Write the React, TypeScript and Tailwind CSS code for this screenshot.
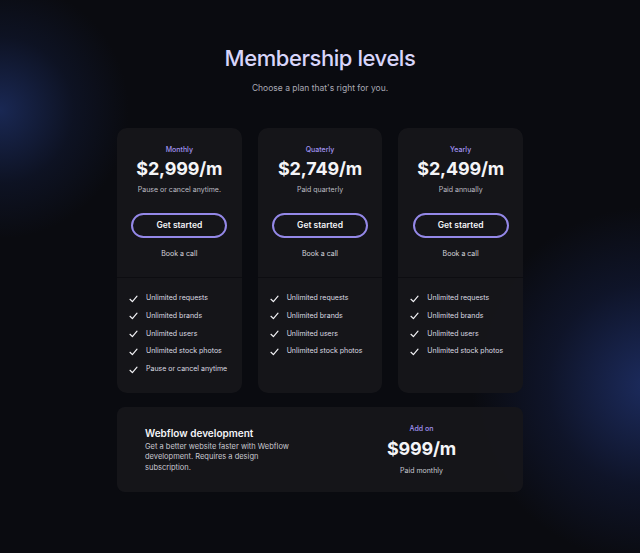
import React from 'react';

interface Plan {
  label: string;
  price: string;
  note: string;
  features: string[];
}

const plans: Plan[] = [
  {
    label: 'Monthly',
    price: '$2,999/m',
    note: 'Pause or cancel anytime.',
    features: ['Unlimited requests', 'Unlimited brands', 'Unlimited users', 'Unlimited stock photos', 'Pause or cancel anytime'],
  },
  {
    label: 'Quaterly',
    price: '$2,749/m',
    note: 'Paid quarterly',
    features: ['Unlimited requests', 'Unlimited brands', 'Unlimited users', 'Unlimited stock photos'],
  },
  {
    label: 'Yearly',
    price: '$2,499/m',
    note: 'Paid annually',
    features: ['Unlimited requests', 'Unlimited brands', 'Unlimited users', 'Unlimited stock photos'],
  },
];

const Check = () => (
  <svg width="9" height="8" viewBox="0 0 9 8" fill="none" className="shrink-0 mt-[1px]">
    <path d="M1 4.3L3.4 6.6L8 1.2" stroke="#f2f2f5" strokeWidth="1.2" strokeLinecap="round" strokeLinejoin="round" />
  </svg>
);

const PlanCard: React.FC<{ plan: Plan }> = ({ plan }) => (
  <div className="flex flex-col rounded-[10px] bg-[#16161a]/95 overflow-hidden">
    <div className="flex flex-col items-center pt-[17px] pb-[18px]">
      <div className="text-[7px] leading-[10px] font-medium text-[#a193f2]">{plan.label}</div>
      <div className="mt-[3px] text-[18px] leading-[22px] font-bold text-[#f4f4f7] tracking-[-0.01em]">{plan.price}</div>
      <div className="mt-[5px] text-[7px] leading-[10px] text-[#bdbdc4]">{plan.note}</div>
      <button className="mt-[18px] h-[25px] w-[96px] rounded-full border-2 border-[#9488e8] text-[8.5px] font-semibold text-[#f4f4f7]">
        Get started
      </button>
      <div className="mt-[11px] text-[7px] leading-[10px] text-[#d6d6dd]">Book a call</div>
    </div>
    <div className="flex flex-col gap-[7.8px] border-t border-[#0d0d11] pl-[12px] pt-[15px] pb-[19px]">
      {plan.features.map((f) => (
        <div key={f} className="flex items-center gap-[8px] text-[7px] leading-[10px] text-[#dcdce2]">
          <Check />
          <span>{f}</span>
        </div>
      ))}
    </div>
  </div>
);

export default function App() {
  return (
    <div className="relative min-h-[553px] overflow-hidden bg-[#0a0b10] font-['Inter',sans-serif]">
      {/* background glows */}
      <div className="absolute left-[-130px] top-[-20px] h-[260px] w-[260px] rounded-full bg-[radial-gradient(circle,rgba(32,52,112,0.7)_0%,rgba(20,32,70,0.35)_40%,transparent_70%)]" />
      <div className="absolute left-[470px] top-[205px] h-[360px] w-[360px] rounded-full bg-[radial-gradient(circle,rgba(34,54,120,0.75)_0%,rgba(22,34,78,0.4)_40%,transparent_70%)]" />

      <div className="relative flex flex-col items-center pt-[44px]">
        <h1 className="text-[22px] leading-[28px] font-medium tracking-[-0.02em] text-[#d8d5fa]">Membership levels</h1>
        <p className="mt-[10px] text-[8.5px] leading-[12px] text-[#a9a9b4]">Choose a plan that's right for you.</p>

        <div className="mt-[34px] grid w-[406px] grid-cols-3 gap-[16px]">
          {plans.map((p) => (
            <PlanCard key={p.label} plan={p} />
          ))}
        </div>

        <div className="mt-[14px] grid h-[85px] w-[406px] grid-cols-2 items-center rounded-[8px] bg-[#16161a]/95">
          <div className="pl-[28px]">
            <div className="text-[10px] leading-[14px] font-semibold text-[#f4f4f7]">Webflow development</div>
            <p className="mt-[2px] w-[150px] text-[7.5px] leading-[10.5px] text-[#c9c9d1]">
              Get a better website faster with Webflow development. Requires a design subscription.
            </p>
          </div>
          <div className="flex flex-col items-center">
            <div className="text-[7px] leading-[10px] font-medium text-[#a193f2]">Add on</div>
            <div className="mt-[4px] text-[18px] leading-[22px] font-bold tracking-[-0.01em] text-[#f4f4f7]">$999/m</div>
            <div className="mt-[6px] text-[7px] leading-[10px] text-[#c9c9d1]">Paid monthly</div>
          </div>
        </div>
      </div>
    </div>
  );
}
